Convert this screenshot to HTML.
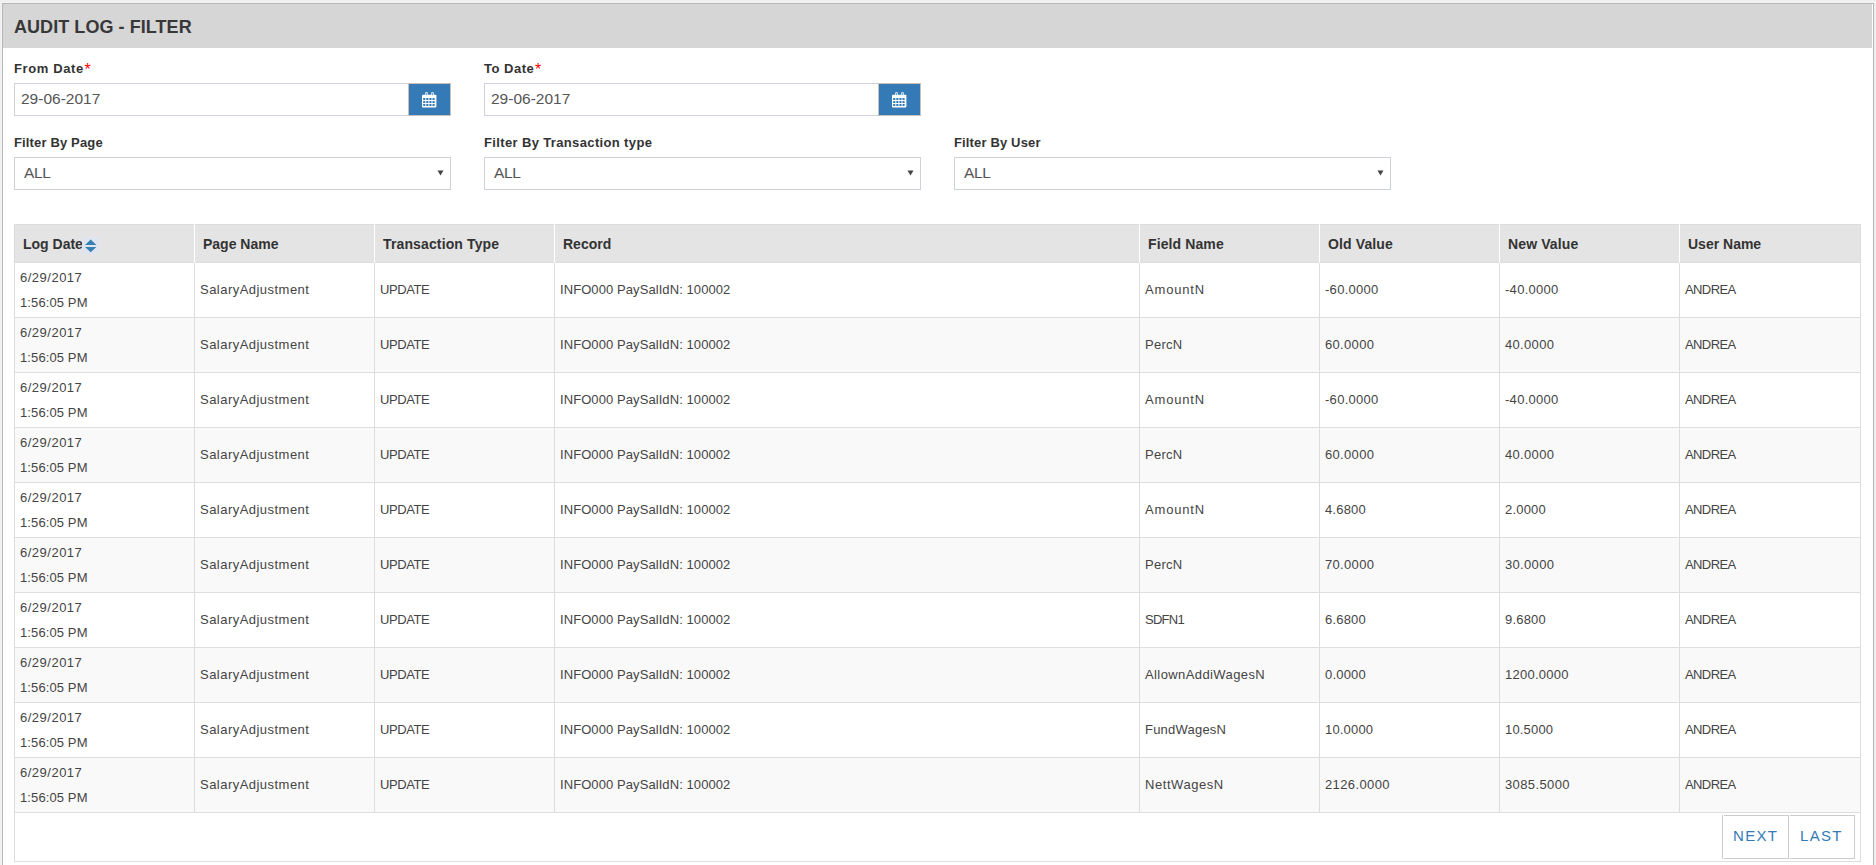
<!DOCTYPE html><html><head><meta charset="utf-8"><style>
*{margin:0;padding:0;box-sizing:border-box}
html,body{width:1876px;height:865px;overflow:hidden;background:#efefef;font-family:"Liberation Sans",sans-serif;color:#333}
.a{position:absolute}
.t{position:absolute;white-space:nowrap;line-height:1}
.panel{left:2px;top:3px;width:1872px;height:870px;border:1px solid #b5b5b5;background:#fff}
.hdr{left:3px;top:4px;width:1869px;height:44px;background:#d6d6d6}
.title{left:14px;font-size:18px;font-weight:bold;color:#383838}
.lbl{font-size:13px;font-weight:bold;color:#333}
.req{position:absolute;font-size:16px;color:#f00;line-height:1}
.inp{height:33px;border:1px solid #cdd2da;background:#fff}
.btn{background:#337ab7;border:1px solid #c9c2bb}
.val{font-size:15.5px;color:#555}
.cell{font-size:13px;color:#444}
.th{font-size:14px;font-weight:bold;color:#333}
.pg{font-size:15px;color:#337ab7}
</style></head><body>
<div class="a" style="left:1px;top:2px;width:1875px;height:870px;border-left:1px solid #f5f5f5;border-top:1px solid #f5f5f5"></div>
<div class="a panel"></div>
<div class="a hdr"></div>
<div class="t title" style="top:18px;letter-spacing:0.06px;">AUDIT LOG - FILTER</div>
<div class="t lbl" style="left:14px;top:62px;letter-spacing:0.62px;">From Date</div>
<div class="req" style="left:84.5px;top:62px">*</div>
<div class="a inp" style="left:14px;top:83px;width:437px"></div>
<div class="a btn" style="left:408px;top:83px;width:43px;height:33px"></div>
<div class="t val" style="left:21px;top:91px;">29-06-2017</div>
<svg class="a" style="left:421px;top:91px" width="17" height="18" viewBox="0 0 17 18"><path fill="#fff" d="M1 4.6Q1 3.7 1.9 3.7H14.5Q15.4 3.7 15.4 4.6V15.5Q15.4 16.4 14.5 16.4H1.9Q1 16.4 1 15.5Z"/><rect x="4.3" y="1" width="2.4" height="4.2" rx="0.9" fill="#fff"/><rect x="10.3" y="1" width="2.4" height="4.2" rx="0.9" fill="#fff"/><rect x="5.2" y="1.6" width="0.7" height="2.6" fill="#337ab7"/><rect x="11.2" y="1.6" width="0.7" height="2.6" fill="#337ab7"/><g fill="#337ab7"><rect x="2.2" y="7" width="2.1" height="2"/><rect x="5.3" y="7" width="2.1" height="2"/><rect x="8.4" y="7" width="2.1" height="2"/><rect x="11.5" y="7" width="2.1" height="2"/><rect x="2.2" y="10" width="2.1" height="2"/><rect x="5.3" y="10" width="2.1" height="2"/><rect x="8.4" y="10" width="2.1" height="2"/><rect x="11.5" y="10" width="2.1" height="2"/><rect x="2.2" y="13" width="2.1" height="2"/><rect x="5.3" y="13" width="2.1" height="2"/><rect x="8.4" y="13" width="2.1" height="2"/><rect x="11.5" y="13" width="2.1" height="2"/></g></svg>
<div class="t lbl" style="left:484px;top:62px;letter-spacing:0.50px;">To Date</div>
<div class="req" style="left:535px;top:62px">*</div>
<div class="a inp" style="left:484px;top:83px;width:437px"></div>
<div class="a btn" style="left:878px;top:83px;width:43px;height:33px"></div>
<div class="t val" style="left:491px;top:91px;">29-06-2017</div>
<svg class="a" style="left:891px;top:91px" width="17" height="18" viewBox="0 0 17 18"><path fill="#fff" d="M1 4.6Q1 3.7 1.9 3.7H14.5Q15.4 3.7 15.4 4.6V15.5Q15.4 16.4 14.5 16.4H1.9Q1 16.4 1 15.5Z"/><rect x="4.3" y="1" width="2.4" height="4.2" rx="0.9" fill="#fff"/><rect x="10.3" y="1" width="2.4" height="4.2" rx="0.9" fill="#fff"/><rect x="5.2" y="1.6" width="0.7" height="2.6" fill="#337ab7"/><rect x="11.2" y="1.6" width="0.7" height="2.6" fill="#337ab7"/><g fill="#337ab7"><rect x="2.2" y="7" width="2.1" height="2"/><rect x="5.3" y="7" width="2.1" height="2"/><rect x="8.4" y="7" width="2.1" height="2"/><rect x="11.5" y="7" width="2.1" height="2"/><rect x="2.2" y="10" width="2.1" height="2"/><rect x="5.3" y="10" width="2.1" height="2"/><rect x="8.4" y="10" width="2.1" height="2"/><rect x="11.5" y="10" width="2.1" height="2"/><rect x="2.2" y="13" width="2.1" height="2"/><rect x="5.3" y="13" width="2.1" height="2"/><rect x="8.4" y="13" width="2.1" height="2"/><rect x="11.5" y="13" width="2.1" height="2"/></g></svg>
<div class="t lbl" style="left:14px;top:136px;letter-spacing:0.15px;">Filter By Page</div>
<div class="a inp" style="left:14px;top:157px;width:437px"></div>
<div class="t val" style="left:24px;top:165px;letter-spacing:-0.40px;">ALL</div>
<svg class="a" style="left:436.5px;top:170px" width="7" height="6" viewBox="0 0 7 6"><path d="M0.5 0.5H6.5L3.5 5.5Z" fill="#444"/></svg>
<div class="t lbl" style="left:484px;top:136px;letter-spacing:0.36px;">Filter By Transaction type</div>
<div class="a inp" style="left:484px;top:157px;width:437px"></div>
<div class="t val" style="left:494px;top:165px;letter-spacing:-0.40px;">ALL</div>
<svg class="a" style="left:906.5px;top:170px" width="7" height="6" viewBox="0 0 7 6"><path d="M0.5 0.5H6.5L3.5 5.5Z" fill="#444"/></svg>
<div class="t lbl" style="left:954px;top:136px;letter-spacing:0.15px;">Filter By User</div>
<div class="a inp" style="left:954px;top:157px;width:437px"></div>
<div class="t val" style="left:964px;top:165px;letter-spacing:-0.40px;">ALL</div>
<svg class="a" style="left:1376.5px;top:170px" width="7" height="6" viewBox="0 0 7 6"><path d="M0.5 0.5H6.5L3.5 5.5Z" fill="#444"/></svg>
<div class="a" style="left:14px;top:224px;width:1847px;height:39px;background:#e4e4e4;border:1px solid #dcdcdc;border-bottom-color:#dddddd"></div>
<div class="t th" style="left:23px;top:237px;">Log Date</div>
<div class="a" style="left:194px;top:224px;width:1px;height:39px;background:#fff"></div>
<div class="t th" style="left:203px;top:237px;">Page Name</div>
<div class="a" style="left:374px;top:224px;width:1px;height:39px;background:#fff"></div>
<div class="t th" style="left:383px;top:237px;letter-spacing:0.13px;">Transaction Type</div>
<div class="a" style="left:554px;top:224px;width:1px;height:39px;background:#fff"></div>
<div class="t th" style="left:563px;top:237px;">Record</div>
<div class="a" style="left:1139px;top:224px;width:1px;height:39px;background:#fff"></div>
<div class="t th" style="left:1148px;top:237px;letter-spacing:0.11px;">Field Name</div>
<div class="a" style="left:1319px;top:224px;width:1px;height:39px;background:#fff"></div>
<div class="t th" style="left:1328px;top:237px;letter-spacing:0.12px;">Old Value</div>
<div class="a" style="left:1499px;top:224px;width:1px;height:39px;background:#fff"></div>
<div class="t th" style="left:1508px;top:237px;letter-spacing:0.12px;">New Value</div>
<div class="a" style="left:1679px;top:224px;width:1px;height:39px;background:#fff"></div>
<div class="t th" style="left:1688px;top:237px;">User Name</div>
<div class="a" style="left:82px;top:237px;width:17px;height:17px;background:#dfe4ee"></div>
<svg class="a" style="left:82px;top:237px" width="17" height="17" viewBox="0 0 17 17"><path d="M3 8H14.4L8.7 2.6Z M3 10H14.4L8.7 15.2Z" fill="#3580b5"/></svg>
<div class="a" style="left:14px;top:263px;width:1847px;height:55px;background:#fff;border:1px solid #ddd;border-top:none"></div>
<div class="a" style="left:194px;top:263px;width:1px;height:54px;background:#ddd"></div>
<div class="a" style="left:374px;top:263px;width:1px;height:54px;background:#ddd"></div>
<div class="a" style="left:554px;top:263px;width:1px;height:54px;background:#ddd"></div>
<div class="a" style="left:1139px;top:263px;width:1px;height:54px;background:#ddd"></div>
<div class="a" style="left:1319px;top:263px;width:1px;height:54px;background:#ddd"></div>
<div class="a" style="left:1499px;top:263px;width:1px;height:54px;background:#ddd"></div>
<div class="a" style="left:1679px;top:263px;width:1px;height:54px;background:#ddd"></div>
<div class="t cell" style="left:20px;top:271px;letter-spacing:0.50px;">6/29/2017</div>
<div class="t cell" style="left:20px;top:296px;letter-spacing:0.11px;">1:56:05 PM</div>
<div class="t cell" style="left:200px;top:283px;letter-spacing:0.47px;">SalaryAdjustment</div>
<div class="t cell" style="left:380px;top:283px;letter-spacing:-0.40px;">UPDATE</div>
<div class="t cell" style="left:560px;top:283px;letter-spacing:0.08px;">INFO000 PaySalIdN: 100002</div>
<div class="t cell" style="left:1145px;top:283px;letter-spacing:0.83px;">AmountN</div>
<div class="t cell" style="left:1325px;top:283px;letter-spacing:0.29px;">-60.0000</div>
<div class="t cell" style="left:1505px;top:283px;letter-spacing:0.29px;">-40.0000</div>
<div class="t cell" style="left:1685px;top:283px;letter-spacing:-0.60px;">ANDREA</div>
<div class="a" style="left:14px;top:318px;width:1847px;height:55px;background:#f9f9f9;border:1px solid #ddd;border-top:none"></div>
<div class="a" style="left:194px;top:318px;width:1px;height:54px;background:#ddd"></div>
<div class="a" style="left:374px;top:318px;width:1px;height:54px;background:#ddd"></div>
<div class="a" style="left:554px;top:318px;width:1px;height:54px;background:#ddd"></div>
<div class="a" style="left:1139px;top:318px;width:1px;height:54px;background:#ddd"></div>
<div class="a" style="left:1319px;top:318px;width:1px;height:54px;background:#ddd"></div>
<div class="a" style="left:1499px;top:318px;width:1px;height:54px;background:#ddd"></div>
<div class="a" style="left:1679px;top:318px;width:1px;height:54px;background:#ddd"></div>
<div class="t cell" style="left:20px;top:326px;letter-spacing:0.50px;">6/29/2017</div>
<div class="t cell" style="left:20px;top:351px;letter-spacing:0.11px;">1:56:05 PM</div>
<div class="t cell" style="left:200px;top:338px;letter-spacing:0.47px;">SalaryAdjustment</div>
<div class="t cell" style="left:380px;top:338px;letter-spacing:-0.40px;">UPDATE</div>
<div class="t cell" style="left:560px;top:338px;letter-spacing:0.08px;">INFO000 PaySalIdN: 100002</div>
<div class="t cell" style="left:1145px;top:338px;letter-spacing:0.25px;">PercN</div>
<div class="t cell" style="left:1325px;top:338px;letter-spacing:0.33px;">60.0000</div>
<div class="t cell" style="left:1505px;top:338px;letter-spacing:0.33px;">40.0000</div>
<div class="t cell" style="left:1685px;top:338px;letter-spacing:-0.60px;">ANDREA</div>
<div class="a" style="left:14px;top:373px;width:1847px;height:55px;background:#fff;border:1px solid #ddd;border-top:none"></div>
<div class="a" style="left:194px;top:373px;width:1px;height:54px;background:#ddd"></div>
<div class="a" style="left:374px;top:373px;width:1px;height:54px;background:#ddd"></div>
<div class="a" style="left:554px;top:373px;width:1px;height:54px;background:#ddd"></div>
<div class="a" style="left:1139px;top:373px;width:1px;height:54px;background:#ddd"></div>
<div class="a" style="left:1319px;top:373px;width:1px;height:54px;background:#ddd"></div>
<div class="a" style="left:1499px;top:373px;width:1px;height:54px;background:#ddd"></div>
<div class="a" style="left:1679px;top:373px;width:1px;height:54px;background:#ddd"></div>
<div class="t cell" style="left:20px;top:381px;letter-spacing:0.50px;">6/29/2017</div>
<div class="t cell" style="left:20px;top:406px;letter-spacing:0.11px;">1:56:05 PM</div>
<div class="t cell" style="left:200px;top:393px;letter-spacing:0.47px;">SalaryAdjustment</div>
<div class="t cell" style="left:380px;top:393px;letter-spacing:-0.40px;">UPDATE</div>
<div class="t cell" style="left:560px;top:393px;letter-spacing:0.08px;">INFO000 PaySalIdN: 100002</div>
<div class="t cell" style="left:1145px;top:393px;letter-spacing:0.83px;">AmountN</div>
<div class="t cell" style="left:1325px;top:393px;letter-spacing:0.29px;">-60.0000</div>
<div class="t cell" style="left:1505px;top:393px;letter-spacing:0.29px;">-40.0000</div>
<div class="t cell" style="left:1685px;top:393px;letter-spacing:-0.60px;">ANDREA</div>
<div class="a" style="left:14px;top:428px;width:1847px;height:55px;background:#f9f9f9;border:1px solid #ddd;border-top:none"></div>
<div class="a" style="left:194px;top:428px;width:1px;height:54px;background:#ddd"></div>
<div class="a" style="left:374px;top:428px;width:1px;height:54px;background:#ddd"></div>
<div class="a" style="left:554px;top:428px;width:1px;height:54px;background:#ddd"></div>
<div class="a" style="left:1139px;top:428px;width:1px;height:54px;background:#ddd"></div>
<div class="a" style="left:1319px;top:428px;width:1px;height:54px;background:#ddd"></div>
<div class="a" style="left:1499px;top:428px;width:1px;height:54px;background:#ddd"></div>
<div class="a" style="left:1679px;top:428px;width:1px;height:54px;background:#ddd"></div>
<div class="t cell" style="left:20px;top:436px;letter-spacing:0.50px;">6/29/2017</div>
<div class="t cell" style="left:20px;top:461px;letter-spacing:0.11px;">1:56:05 PM</div>
<div class="t cell" style="left:200px;top:448px;letter-spacing:0.47px;">SalaryAdjustment</div>
<div class="t cell" style="left:380px;top:448px;letter-spacing:-0.40px;">UPDATE</div>
<div class="t cell" style="left:560px;top:448px;letter-spacing:0.08px;">INFO000 PaySalIdN: 100002</div>
<div class="t cell" style="left:1145px;top:448px;letter-spacing:0.25px;">PercN</div>
<div class="t cell" style="left:1325px;top:448px;letter-spacing:0.33px;">60.0000</div>
<div class="t cell" style="left:1505px;top:448px;letter-spacing:0.33px;">40.0000</div>
<div class="t cell" style="left:1685px;top:448px;letter-spacing:-0.60px;">ANDREA</div>
<div class="a" style="left:14px;top:483px;width:1847px;height:55px;background:#fff;border:1px solid #ddd;border-top:none"></div>
<div class="a" style="left:194px;top:483px;width:1px;height:54px;background:#ddd"></div>
<div class="a" style="left:374px;top:483px;width:1px;height:54px;background:#ddd"></div>
<div class="a" style="left:554px;top:483px;width:1px;height:54px;background:#ddd"></div>
<div class="a" style="left:1139px;top:483px;width:1px;height:54px;background:#ddd"></div>
<div class="a" style="left:1319px;top:483px;width:1px;height:54px;background:#ddd"></div>
<div class="a" style="left:1499px;top:483px;width:1px;height:54px;background:#ddd"></div>
<div class="a" style="left:1679px;top:483px;width:1px;height:54px;background:#ddd"></div>
<div class="t cell" style="left:20px;top:491px;letter-spacing:0.50px;">6/29/2017</div>
<div class="t cell" style="left:20px;top:516px;letter-spacing:0.11px;">1:56:05 PM</div>
<div class="t cell" style="left:200px;top:503px;letter-spacing:0.47px;">SalaryAdjustment</div>
<div class="t cell" style="left:380px;top:503px;letter-spacing:-0.40px;">UPDATE</div>
<div class="t cell" style="left:560px;top:503px;letter-spacing:0.08px;">INFO000 PaySalIdN: 100002</div>
<div class="t cell" style="left:1145px;top:503px;letter-spacing:0.83px;">AmountN</div>
<div class="t cell" style="left:1325px;top:503px;letter-spacing:0.20px;">4.6800</div>
<div class="t cell" style="left:1505px;top:503px;letter-spacing:0.20px;">2.0000</div>
<div class="t cell" style="left:1685px;top:503px;letter-spacing:-0.60px;">ANDREA</div>
<div class="a" style="left:14px;top:538px;width:1847px;height:55px;background:#f9f9f9;border:1px solid #ddd;border-top:none"></div>
<div class="a" style="left:194px;top:538px;width:1px;height:54px;background:#ddd"></div>
<div class="a" style="left:374px;top:538px;width:1px;height:54px;background:#ddd"></div>
<div class="a" style="left:554px;top:538px;width:1px;height:54px;background:#ddd"></div>
<div class="a" style="left:1139px;top:538px;width:1px;height:54px;background:#ddd"></div>
<div class="a" style="left:1319px;top:538px;width:1px;height:54px;background:#ddd"></div>
<div class="a" style="left:1499px;top:538px;width:1px;height:54px;background:#ddd"></div>
<div class="a" style="left:1679px;top:538px;width:1px;height:54px;background:#ddd"></div>
<div class="t cell" style="left:20px;top:546px;letter-spacing:0.50px;">6/29/2017</div>
<div class="t cell" style="left:20px;top:571px;letter-spacing:0.11px;">1:56:05 PM</div>
<div class="t cell" style="left:200px;top:558px;letter-spacing:0.47px;">SalaryAdjustment</div>
<div class="t cell" style="left:380px;top:558px;letter-spacing:-0.40px;">UPDATE</div>
<div class="t cell" style="left:560px;top:558px;letter-spacing:0.08px;">INFO000 PaySalIdN: 100002</div>
<div class="t cell" style="left:1145px;top:558px;letter-spacing:0.25px;">PercN</div>
<div class="t cell" style="left:1325px;top:558px;letter-spacing:0.33px;">70.0000</div>
<div class="t cell" style="left:1505px;top:558px;letter-spacing:0.33px;">30.0000</div>
<div class="t cell" style="left:1685px;top:558px;letter-spacing:-0.60px;">ANDREA</div>
<div class="a" style="left:14px;top:593px;width:1847px;height:55px;background:#fff;border:1px solid #ddd;border-top:none"></div>
<div class="a" style="left:194px;top:593px;width:1px;height:54px;background:#ddd"></div>
<div class="a" style="left:374px;top:593px;width:1px;height:54px;background:#ddd"></div>
<div class="a" style="left:554px;top:593px;width:1px;height:54px;background:#ddd"></div>
<div class="a" style="left:1139px;top:593px;width:1px;height:54px;background:#ddd"></div>
<div class="a" style="left:1319px;top:593px;width:1px;height:54px;background:#ddd"></div>
<div class="a" style="left:1499px;top:593px;width:1px;height:54px;background:#ddd"></div>
<div class="a" style="left:1679px;top:593px;width:1px;height:54px;background:#ddd"></div>
<div class="t cell" style="left:20px;top:601px;letter-spacing:0.50px;">6/29/2017</div>
<div class="t cell" style="left:20px;top:626px;letter-spacing:0.11px;">1:56:05 PM</div>
<div class="t cell" style="left:200px;top:613px;letter-spacing:0.47px;">SalaryAdjustment</div>
<div class="t cell" style="left:380px;top:613px;letter-spacing:-0.40px;">UPDATE</div>
<div class="t cell" style="left:560px;top:613px;letter-spacing:0.08px;">INFO000 PaySalIdN: 100002</div>
<div class="t cell" style="left:1145px;top:613px;letter-spacing:-0.75px;">SDFN1</div>
<div class="t cell" style="left:1325px;top:613px;letter-spacing:0.20px;">6.6800</div>
<div class="t cell" style="left:1505px;top:613px;letter-spacing:0.20px;">9.6800</div>
<div class="t cell" style="left:1685px;top:613px;letter-spacing:-0.60px;">ANDREA</div>
<div class="a" style="left:14px;top:648px;width:1847px;height:55px;background:#f9f9f9;border:1px solid #ddd;border-top:none"></div>
<div class="a" style="left:194px;top:648px;width:1px;height:54px;background:#ddd"></div>
<div class="a" style="left:374px;top:648px;width:1px;height:54px;background:#ddd"></div>
<div class="a" style="left:554px;top:648px;width:1px;height:54px;background:#ddd"></div>
<div class="a" style="left:1139px;top:648px;width:1px;height:54px;background:#ddd"></div>
<div class="a" style="left:1319px;top:648px;width:1px;height:54px;background:#ddd"></div>
<div class="a" style="left:1499px;top:648px;width:1px;height:54px;background:#ddd"></div>
<div class="a" style="left:1679px;top:648px;width:1px;height:54px;background:#ddd"></div>
<div class="t cell" style="left:20px;top:656px;letter-spacing:0.50px;">6/29/2017</div>
<div class="t cell" style="left:20px;top:681px;letter-spacing:0.11px;">1:56:05 PM</div>
<div class="t cell" style="left:200px;top:668px;letter-spacing:0.47px;">SalaryAdjustment</div>
<div class="t cell" style="left:380px;top:668px;letter-spacing:-0.40px;">UPDATE</div>
<div class="t cell" style="left:560px;top:668px;letter-spacing:0.08px;">INFO000 PaySalIdN: 100002</div>
<div class="t cell" style="left:1145px;top:668px;letter-spacing:0.40px;">AllownAddiWagesN</div>
<div class="t cell" style="left:1325px;top:668px;letter-spacing:0.20px;">0.0000</div>
<div class="t cell" style="left:1505px;top:668px;letter-spacing:0.25px;">1200.0000</div>
<div class="t cell" style="left:1685px;top:668px;letter-spacing:-0.60px;">ANDREA</div>
<div class="a" style="left:14px;top:703px;width:1847px;height:55px;background:#fff;border:1px solid #ddd;border-top:none"></div>
<div class="a" style="left:194px;top:703px;width:1px;height:54px;background:#ddd"></div>
<div class="a" style="left:374px;top:703px;width:1px;height:54px;background:#ddd"></div>
<div class="a" style="left:554px;top:703px;width:1px;height:54px;background:#ddd"></div>
<div class="a" style="left:1139px;top:703px;width:1px;height:54px;background:#ddd"></div>
<div class="a" style="left:1319px;top:703px;width:1px;height:54px;background:#ddd"></div>
<div class="a" style="left:1499px;top:703px;width:1px;height:54px;background:#ddd"></div>
<div class="a" style="left:1679px;top:703px;width:1px;height:54px;background:#ddd"></div>
<div class="t cell" style="left:20px;top:711px;letter-spacing:0.50px;">6/29/2017</div>
<div class="t cell" style="left:20px;top:736px;letter-spacing:0.11px;">1:56:05 PM</div>
<div class="t cell" style="left:200px;top:723px;letter-spacing:0.47px;">SalaryAdjustment</div>
<div class="t cell" style="left:380px;top:723px;letter-spacing:-0.40px;">UPDATE</div>
<div class="t cell" style="left:560px;top:723px;letter-spacing:0.08px;">INFO000 PaySalIdN: 100002</div>
<div class="t cell" style="left:1145px;top:723px;letter-spacing:0.22px;">FundWagesN</div>
<div class="t cell" style="left:1325px;top:723px;letter-spacing:0.18px;">10.0000</div>
<div class="t cell" style="left:1505px;top:723px;letter-spacing:0.18px;">10.5000</div>
<div class="t cell" style="left:1685px;top:723px;letter-spacing:-0.60px;">ANDREA</div>
<div class="a" style="left:14px;top:758px;width:1847px;height:55px;background:#f9f9f9;border:1px solid #ddd;border-top:none"></div>
<div class="a" style="left:194px;top:758px;width:1px;height:54px;background:#ddd"></div>
<div class="a" style="left:374px;top:758px;width:1px;height:54px;background:#ddd"></div>
<div class="a" style="left:554px;top:758px;width:1px;height:54px;background:#ddd"></div>
<div class="a" style="left:1139px;top:758px;width:1px;height:54px;background:#ddd"></div>
<div class="a" style="left:1319px;top:758px;width:1px;height:54px;background:#ddd"></div>
<div class="a" style="left:1499px;top:758px;width:1px;height:54px;background:#ddd"></div>
<div class="a" style="left:1679px;top:758px;width:1px;height:54px;background:#ddd"></div>
<div class="t cell" style="left:20px;top:766px;letter-spacing:0.50px;">6/29/2017</div>
<div class="t cell" style="left:20px;top:791px;letter-spacing:0.11px;">1:56:05 PM</div>
<div class="t cell" style="left:200px;top:778px;letter-spacing:0.47px;">SalaryAdjustment</div>
<div class="t cell" style="left:380px;top:778px;letter-spacing:-0.40px;">UPDATE</div>
<div class="t cell" style="left:560px;top:778px;letter-spacing:0.08px;">INFO000 PaySalIdN: 100002</div>
<div class="t cell" style="left:1145px;top:778px;letter-spacing:0.56px;">NettWagesN</div>
<div class="t cell" style="left:1325px;top:778px;letter-spacing:0.38px;">2126.0000</div>
<div class="t cell" style="left:1505px;top:778px;letter-spacing:0.38px;">3085.5000</div>
<div class="t cell" style="left:1685px;top:778px;letter-spacing:-0.60px;">ANDREA</div>
<div class="a" style="left:14px;top:813px;width:1847px;height:49px;background:#fff;border:1px solid #ddd;border-top:none"></div>
<div class="a" style="left:1722px;top:815px;width:1px;height:44px;background:#ccc"></div>
<div class="a" style="left:1724px;top:815px;width:65px;height:44px;border:1px solid #ccc;border-left:none"></div>
<div class="a" style="left:1790px;top:815px;width:65px;height:44px;border:1px solid #ccc;border-left:none"></div>
<div class="t pg" style="left:1733px;top:828px;letter-spacing:1.33px;">NEXT</div>
<div class="t pg" style="left:1800px;top:828px;letter-spacing:1.33px;">LAST</div>
</body></html>
